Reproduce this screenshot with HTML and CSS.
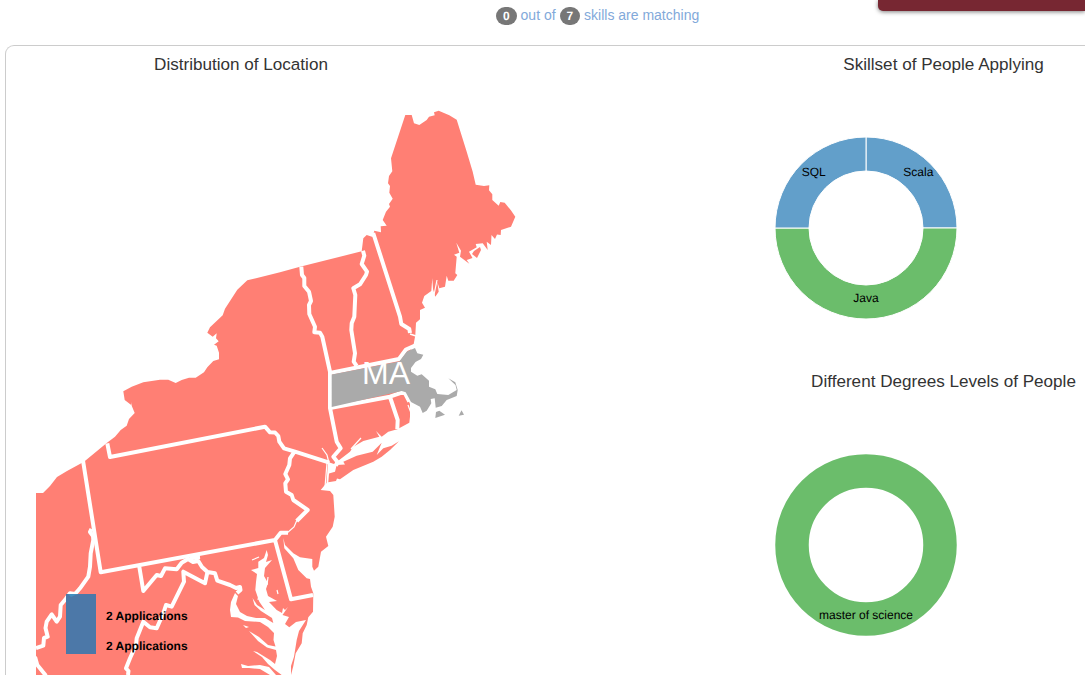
FILE: index.html
```html
<!DOCTYPE html>
<html lang="en">
<head>
<meta charset="utf-8">
<title>Applications</title>
<link rel="stylesheet" href="styles.css">
</head>
<body>
<header class="top">
  <p class="matching"><span class="badge">0</span> out of <span class="badge">7</span> skills are matching</p>
  <div class="action"></div>
</header>
<main class="panel">
  <section class="location">
    <h2 class="title">Distribution of Location</h2>
    <svg class="map" viewBox="36 90 524 585" width="524" height="585">
      <path class="land" d="M36 675V493H43L50 486 57 477 67 471 84 461.7 106.7 443 115 436.7 120.7 430 126.7 425.7 129 419 134.7 413 131.7 405.7 131.2 402V405L124.7 400 123.3 391.3 131.7 386.7 143.3 382.3 160 379.7H168.3L175.7 383 181.7 380 189 377.7H195.7L204 372.3 207.3 367.3 213.3 361 219 359.3V352.7L216.7 345.7 214 344.7 218.7 341.3 216 338.3 216.7 333.3 212.7 336.7 207.3 332.7 210 327.3 222.7 315.3 225 308.7 237.3 289.7 247.3 280.3 280 272.3 300 266.7 361.7 251.3 363.3 238.3 366.7 235 372.7 237 374.3 230.7 381 232.3 380.7 226.3 386.7 225.7 382.7 220 386 211.7 390 206.7 389 204 392.7 198.7 389.3 192.7 390 186 388 183.3 389 176 392.3 171.3 391 158.3 405.3 115H411.7L414 123.3 419.3 125 426.7 120 429 116.7 434.7 115.3 434 112.3 438.7 110.7 449.3 115.3 456.7 119.7 466.7 151.7 472.7 171.7 475.7 184.7 484 186 489.3 185.3 489 190.3 492.3 194.3V200L498.7 205.7 500.3 202 504.7 202.7 510.7 210 515.3 216.7 511 226.7 501 230 500.7 235 497 234.5 495 239 491.5 235 491 245 486.7 241.7 487.7 250 482.7 243.3 475.7 244 476.7 247.3 469 251.7 472.5 258 466.7 260 469.3 263.7 460 256.7 461 250.7 456.3 242.7 459.3 252.7 454 254.7 456.7 256.7 455.3 273.3 457.3 275 453.7 280.7H448.3L446.7 275.7 445 286.7 439.3 288.3 437.3 281.7 438.7 291.7 435.3 296.7 433 289 432.3 278.3 431.3 291 424.3 296 422 302.7 425 307.7 420 310V319.3L416 322.7 415.3 335.3 413.7 344 400 375 405 393 410 404 410 416.7 409.3 422.7 397.3 429.3 388.3 431.7 381.7 436.7 376 431 379.3 436.7 363.3 441 353.3 446.7 350 451.7 338.3 460.7 334 464 328 462 326.5 483 320.7 490 330 491 333.3 495 334.7 516.7 332.7 526.7 326 536.7 328.3 546 321 551.7 318.3 566.7 314 570.7 312.3 566.7V559L300 557.3 293.3 553.3 285 545 283.3 538 284.3 548.3 293.3 558.3 298.3 570 306.7 578.3 310 579 311 586.7 313.3 593.3 313 611.7 308.3 617.3 306.7 625 302.7 633.3 301.7 643.3 295.7 653.3 293.3 666 291 675Z"/>
      <path class="land" d="M336.7 465L345 464.5 343.3 461.7 356.7 455.7 372.7 451.7 381.7 442.7 376.7 455 383.3 448.3 391.7 445.7 399 441.3 390 450 381.7 456.7 373.3 461.7 353.3 470 340 479.3 337 478.5 336 481 328.3 482.3 329 473.5 335 471.7Z"/>
      <path class="land" d="M474 251L480 247 481 250 477 258 472 254Z"/>
      <path class="water" d="M266.7 550L264 558 258.3 561.7 258.3 568 251 570 257 574 256 582 255.3 590 259.3 601.7 265 610 257 605 252.5 598 254.5 605 261 611 272 618 273.3 623 265 618 256 618 247 616 240 612 236 604 238 596 235 593 231 602 230 610 231 617 238 617.5 245 621 260 622 268 627 274 633 273.5 640 275.5 646.5 268 645 259 637 249 631 258 641 267 647.5 276 650 277 656 275 664 270 660 257 652 253 651 262 657 268 664 275 670 281.7 675H291V666L294 656.7 296.7 640 299 631 306 620 296 622 289.3 627.3 285 624 289 617 282.5 615 288 607 285 610 283 608 282 613 276.7 610 269 602 277 601 268 596 266 589 268 583 264 576 265 568 272 560 266 562 268 555Z"/>
      <path class="water" d="M241 664L248 666 260 665 269 667 276 675H270L260 669 249 668 242 668ZM243 625L249 627 246 628Z"/>
      <path class="inlet" d="M261 586L258 600M267 585L268 577M259 557L252 560M277 590L278 594M322 448L327 455 329 463M327 463L325 487M408 405L411 413M412 405L417 417M361 438L351 449M437 280L434 295"/>
      <path class="border" d="M301.3 266.7L302 275 304.3 278V286L309 291.7 311 301 309 305 309.3 314 315 326.7 314.3 332.3 320 332.7 322.3 336.7 330 371.7V408L336.7 441.7 340.7 448.3 333.3 456.7 337.3 461.7 336 466"/>
      <path class="border" d="M363 250.7L364.3 255.7 361.7 264 367 271.7 366 275 360 284.3 353.3 288.3 355.3 295 354.3 316.7 351.7 323.3 351.3 330 355 353.3 353.7 361.7 356.7 366"/>
      <path class="border" d="M373.2 233L400 316.7 401.3 324 409.3 329 410 333"/>
      <path class="border thin" d="M410 334L416 336"/>
      <path class="border" d="M330 373L399 359 406 349.5 415 345.5M330 408L390 396.7 401.7 392.7 405 393.3 409.3 401.7M390 397L397.7 420 397.3 429"/>
      <path class="border" d="M107.3 443.3L110 457 265 426.7 270 432.3 275 432.5 278.3 436 279.3 441.7 284 448.3 295 451.7 329.3 462.7M294 452.3L290 458.3 289.3 465 285.3 474 288 479.3 285.3 483.3 286 491.7 291.7 495 293.3 500 307.7 510 296.7 521"/>
      <path class="inlet" d="M297 520L294 527 287 533"/>
      <path class="border" d="M83 460.5L100.7 572.3 275 540 280.7 532.7H288M275 540L291 599.3 313 595"/>
      <path class="border" d="M91.5 529L90 532 93 536 93.3 540 90.7 553.3 90 566.7 88.3 576.7 80 588.3 75 594 70 593.3 65.7 599 60.7 605 60 616.7 56.7 621.7 51.7 614.3 46.7 621.7 45.5 628 47.7 636.7 44 638 43.3 645.7 36 648M35 656.7L37.3 665 46 675.7"/>
      <path class="border" d="M139.3 566.7L143.3 591 156.7 575 161 576 165 568.3 176.7 569.3 181.7 562.7 188 559 193 562 198.3 561 202 567 207.5 572 215 573.3 217.3 580.7 230 585 236 588 240 587 240.5 590 237 593M190 558L200 557M207.3 572.7L205 583.3 183.3 571.7 184 581.7 171.7 606.7 166 605 163.3 613.3 156.7 628.3 150 627.3 143.3 621.7 136.7 638.3 136 645 130 658.3 126 668.3 128.5 671 128 675"/>
      <path class="pick" d="M331.7 374.5L399.3 361.5 406.7 351.7 415 348 417.3 353.3 423.3 354.7 421 359 415.5 362 411 368 411 371.7 417.3 375.7 421.7 374.3 429 380.7V386.7L435.3 389.3 437.3 394 448.3 395 456.7 390 455.5 385 448.3 378.3 455.3 382.3 457.7 390 456.7 396 446.7 400 441.7 406 435.7 407.7 434.7 398.3 430.7 399 431.3 403.3 426.7 410.7 422.7 413 420 406.7 411 402 405.7 392.3 401.7 391 331.7 407ZM439.3 410.7L445 414.7 435.3 418 436 412ZM461.5 410.3L464 414.7 458.7 415.7Z"/>
      <text class="state" x="386" y="384">MA</text>
      <rect class="swatch" x="66" y="594" width="30" height="60"/>
      <path class="swatch-line" d="M68 594L71 597 78 594Z"/>
      <text class="legend" x="106" y="620">2 Applications</text>
      <text class="legend" x="106" y="650">2 Applications</text>
    </svg>
  </section>
  <section class="charts">
    <figure class="chart">
      <h2 class="title">Skillset of People Applying</h2>
      <svg class="donut" viewBox="-100 -100 200 200" width="200" height="200">
        <path class="blue" d="M0 -91A91 91 0 0 1 91 0H57A57 57 0 0 0 0 -57Z"/>
        <path class="green" d="M91 0A91 91 0 0 1 -91 0H-57A57 57 0 0 0 57 0Z"/>
        <path class="blue" d="M-91 0A91 91 0 0 1 0 -91V-57A57 57 0 0 0 -57 0Z"/>
        <text class="slice" x="52.3" y="-52">Scala</text>
        <text class="slice" x="0" y="74">Java</text>
        <text class="slice" x="-52.3" y="-52">SQL</text>
      </svg>
    </figure>
    <figure class="chart">
      <h2 class="title">Different Degrees Levels of People</h2>
      <svg class="donut" viewBox="-100 -100 200 200" width="200" height="200">
        <circle class="ring" r="74"/>
        <text class="slice" x="0" y="74">master of science</text>
      </svg>
    </figure>
  </section>
</main>
</body>
</html>
```
FILE: styles.css
```css
* { box-sizing: border-box; }
body {
  margin: 0;
  width: 1085px;
  height: 675px;
  overflow: hidden;
  background: #fff;
  color: #333;
  font-family: "Liberation Sans", Arial, sans-serif;
}
.top {
  display: flex;
  height: 45px;
  padding-left: 496px;
}
.matching {
  width: 382px;
  margin: 5px 0 0;
  color: #82a9da;
  font-size: 14px;
  line-height: 20px;
  white-space: nowrap;
}
.badge {
  display: inline-block;
  min-width: 10px;
  padding: 3px 7px;
  border-radius: 10px;
  background: #777;
  color: #fff;
  font-size: 12px;
  font-weight: bold;
  line-height: 12px;
  text-align: center;
  vertical-align: middle;
  text-rendering: geometricPrecision;
}
.action {
  flex: 1;
  height: 11px;
  border-bottom-left-radius: 5px;
  background: #772732;
  box-shadow: 0 1px 4px rgba(0, 0, 0, .5);
}
.panel {
  display: flex;
  width: 1080px;
  height: 630px;
  margin-left: 5px;
  overflow: hidden;
  border: solid #ccc;
  border-width: 1px 0 0 1px;
  border-top-left-radius: 9px;
}
.title {
  margin: 0;
  font-size: 17.1px;
  font-weight: normal;
  line-height: 20px;
  text-align: center;
  white-space: nowrap;
}
.location { flex: none; width: 636px; padding: 9px 0 0 30px; }
.location .title { width: 410px; }
.map { display: block; margin-top: 15px; }
.land { fill: #ff7f74; }
.water { fill: #fff; }
.inlet { fill: none; stroke: #fff; stroke-width: 1.2; }
.border { fill: none; stroke: #fff; stroke-width: 4; stroke-linejoin: round; }
.border.thin { stroke-width: 1.5; }
.pick { fill: #aaa; }
.state { fill: #fff; font-size: 32px; text-anchor: middle; }
.swatch { fill: #4c78a8; }
.swatch-line { fill: #438fc0; }
.legend {
  fill: #000;
  font-size: 12px;
  font-weight: bold;
  text-rendering: geometricPrecision;
}
.charts { flex: none; width: 603px; padding-top: 9px; }
.chart {
  display: flex;
  flex-direction: column;
  height: 317px;
  margin: 0;
}
.donut { margin: 53px 0 0 124px; }
.blue { fill: #629fca; stroke: #fff; stroke-width: 1; }
.green { fill: #6bbd6b; stroke: #fff; stroke-width: 1; }
.ring { fill: none; stroke: #6bbd6b; stroke-width: 33.5; }
.slice {
  fill: #000;
  font-size: 12px;
  text-anchor: middle;
  text-rendering: geometricPrecision;
}
```
